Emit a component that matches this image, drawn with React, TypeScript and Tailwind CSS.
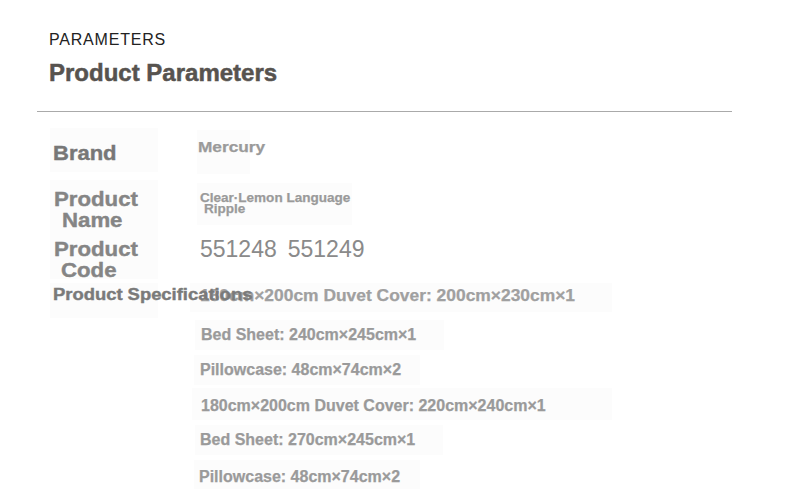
import React from "react";

const box = "bg-[#fcfcfc]";
const sx = "inline-block origin-left";

export default function App() {
  return (
    <div className="w-[790px] h-[489px] bg-white overflow-hidden font-['Liberation_Sans',Arial,sans-serif]">
      {/* Header */}
      <div className="pl-[49px] pt-[29.5px]">
        <div className="text-[16px] leading-[20px] tracking-[0.8px] text-[#222]">PARAMETERS</div>
        <div className="mt-[9.2px] text-[24px] leading-[28px] font-bold text-[#57534f] [-webkit-text-stroke:0.5px_#57534f]">Product Parameters</div>
      </div>
      <div className="mt-[24.3px] ml-[37px] w-[695px] h-px bg-[#aaaaaa]" />

      {/* Body */}
      <div className="flex">
        {/* Labels */}
        <div className="relative z-10 ml-[50px] w-[108px] flex flex-col font-bold [-webkit-text-stroke:0.4px_currentColor]">
          <div className={`mt-[16px] h-[44px] pt-[12.6px] pl-[3px] ${box}`}>
            <div className="text-[20px] leading-[24px] text-[#777]">
              <span className={`${sx} scale-x-[1.1]`}>Brand</span>
            </div>
          </div>
          <div className={`mt-[8px] h-[50px] pt-[8.6px] pl-[4px] ${box}`}>
            <div className="text-[20px] leading-[21px] text-[#858585]">
              <span className={`${sx} scale-x-[1.11]`}>Product</span>
            </div>
            <div className="text-[20px] leading-[21px] text-[#858585] pl-[8px]">
              <span className={`${sx} scale-x-[1.11]`}>Name</span>
            </div>
          </div>
          <div className={`h-[49px] pt-[9.3px] pl-[4px] ${box}`}>
            <div className="text-[20px] leading-[21px] text-[#858585]">
              <span className={`${sx} scale-x-[1.11]`}>Product</span>
            </div>
            <div className="text-[20px] leading-[21px] text-[#858585] pl-[7px]">
              <span className={`${sx} scale-x-[1.11]`}>Code</span>
            </div>
          </div>
          <div className={`mt-[4px] h-[35px] pt-[2.5px] pl-[3px] ${box}`}>
            <div className="text-[16px] leading-[20px] text-[#7a7a7a] whitespace-nowrap">
              <span className={`${sx} scale-x-[1.15]`}>Product Specifications</span>
            </div>
          </div>
        </div>

        {/* Values */}
        <div className="ml-[32px] flex flex-col font-bold text-[#9a9a9a] whitespace-nowrap [-webkit-text-stroke:0.25px_currentColor]">
          <div className={`ml-[7px] mt-[18px] w-[53px] h-[44px] pt-[8.5px] pl-[1px] ${box}`}>
            <div className="text-[15px] leading-[18px]">
              <span className={`${sx} scale-x-[1.15]`}>Mercury</span>
            </div>
          </div>
          <div className={`ml-[7px] mt-[9px] w-[155px] h-[42px] pt-[8.7px] pl-[3px] ${box}`}>
            <div className="text-[13px] leading-[11.5px]">
              <span className={`${sx} scale-x-[1.04]`}>Clear·Lemon Language</span>
            </div>
            <div className="text-[13px] leading-[11.5px] pl-[4px]">
              <span className={`${sx} scale-x-[1.04]`}>Ripple</span>
            </div>
          </div>
          <div className="mt-[10.2px] pl-[10px] text-[23px] leading-[28px] font-normal text-[#8a8a8a] [-webkit-text-stroke:0px] [word-spacing:4.6px]">551248 551249</div>

          <div className={`mt-[19.8px] w-[422px] h-[29px] pt-[3.5px] pl-[10px] ${box}`}>
            <div className="text-[16px] leading-[20px] text-[#a0a0a0]">
              <span className={`${sx} scale-x-[1.088]`}>180cm×200cm Duvet Cover: 200cm×230cm×1</span>
            </div>
          </div>
          <div className={`mt-[8px] ml-[5px] w-[249px] h-[30px] pt-[5.2px] pl-[6px] ${box}`}>
            <div className="text-[16px] leading-[20px]">Bed Sheet: 240cm×245cm×1</div>
          </div>
          <div className={`mt-[5px] ml-[4px] w-[226px] h-[30px] pt-[5.5px] pl-[6px] ${box}`}>
            <div className="text-[16px] leading-[20px]">Pillowcase: 48cm×74cm×2</div>
          </div>
          <div className={`mt-[3px] ml-[2px] w-[420px] h-[32px] pt-[8.2px] pl-[9px] ${box}`}>
            <div className="text-[16px] leading-[20px]">180cm×200cm Duvet Cover: 220cm×240cm×1</div>
          </div>
          <div className={`mt-[5px] ml-[5px] w-[248px] h-[30px] pt-[5.5px] pl-[5px] ${box}`}>
            <div className="text-[16px] leading-[20px]">Bed Sheet: 270cm×245cm×1</div>
          </div>
          <div className={`mt-[5px] ml-[4px] w-[226px] h-[29px] pt-[7.2px] pl-[5px] ${box}`}>
            <div className="text-[16px] leading-[20px]">Pillowcase: 48cm×74cm×2</div>
          </div>
        </div>
      </div>
    </div>
  );
}
